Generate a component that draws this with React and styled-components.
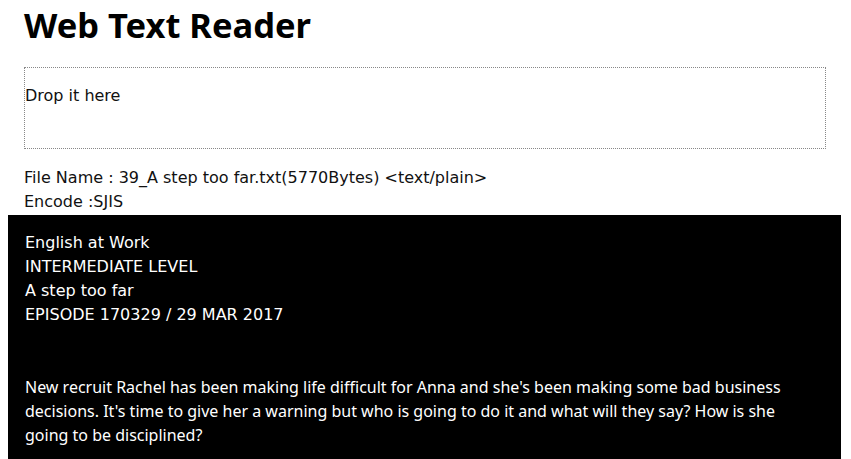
import React from 'react';
import styled, { createGlobalStyle } from 'styled-components';

const GlobalStyle = createGlobalStyle`
    html, body{
        margin: 0;
        padding: 0;
        background: #fff;
        overflow: hidden;
    }
    body{
        font-family: 'DejaVu Sans', 'Noto Sans', sans-serif;
        font-size: 16px;
        color: #111;
    }
`;

const Page = styled.div`
    padding: 0 8px;
    width: 833px;
`;

const Header = styled.div`
    padding: 0 16px;
    h1{
        font-family: 'Noto Sans', sans-serif;
        font-weight: 700;
        font-size: 34.5px;
        line-height: 50px;
        margin: 0 0 17px;
        color: #000;
    }
`;

const DropZone = styled.div`
    border: 1px dotted #888;
    height: 80px;
    width: 800px;
    box-sizing: content-box;
    p{
        margin: 16px 0 0;
        line-height: 24px;
    }
`;

const FileInfo = styled.div`
    margin-top: 17px;
    line-height: 24px;
    padding-bottom: 1px;
`;

const Reader = styled.div`
    background: #000;
    color: #fff;
    font-size: 16px;
    line-height: 24px;
    padding: 16px 26px 24px 17px;
    height: 220px;
    overflow: hidden;
`;

const Line = styled.div`
    white-space: pre;
`;

const Paragraph = styled.p`
    margin: 48px 0 0;
    font-family: 'Noto Sans', sans-serif;
`;

const titleLines = [
    'English at Work',
    'INTERMEDIATE LEVEL',
    'A step too far',
    'EPISODE 170329 / 29 MAR 2017',
];

export default function App(){
    return (
        <>
            <GlobalStyle />
            <Page>
                <Header>
                    <h1>Web Text Reader</h1>
                    <DropZone>
                        <p>Drop it here</p>
                    </DropZone>
                    <FileInfo>
                        <div>File Name : 39_A step too far.txt(5770Bytes) &lt;text/plain&gt;</div>
                        <div>Encode :SJIS</div>
                    </FileInfo>
                </Header>
                <Reader>
                    {titleLines.map((l) => <Line key={l}>{l}</Line>)}
                    <Paragraph>
                        New recruit Rachel has been making life difficult for Anna and she's been making some bad business decisions. It's time to give her a warning but who is going to do it and what will they say? How is she going to be disciplined?
                    </Paragraph>
                </Reader>
            </Page>
        </>
    );
}
